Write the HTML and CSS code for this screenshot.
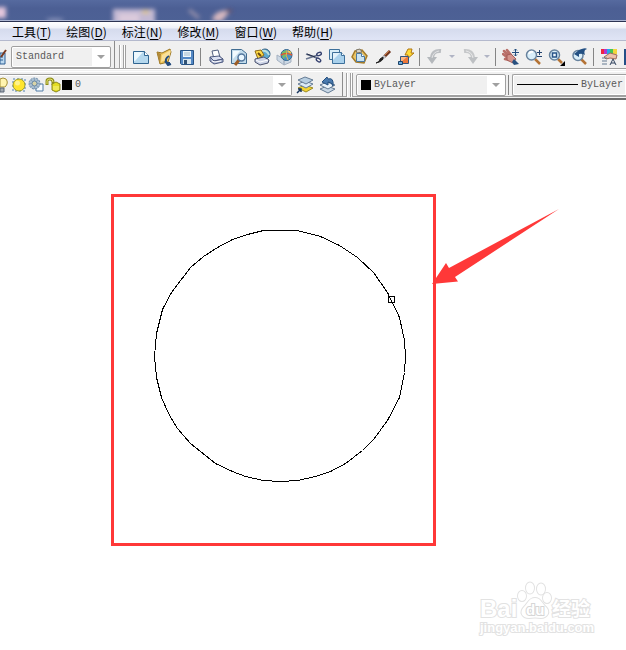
FILE: index.html
```
<!DOCTYPE html>
<html lang="zh-CN">
<head>
<meta charset="utf-8">
<title>CAD</title>
<link rel="stylesheet" href="styles.css">
</head>
<body>
<header class="titlebar">
  <svg class="glass" aria-hidden="true">
    <defs><filter id="soft" x="-50%" y="-50%" width="200%" height="200%"><feGaussianBlur stdDeviation="2"/></filter></defs>
    <g filter="url(#soft)">
      <rect x="-6" y="7" width="12" height="11" fill="#e3c6dc"/>
      <rect x="113" y="9" width="42" height="16" fill="#c3b9d3"/>
      <rect x="119" y="14" width="20" height="8" fill="#dccbdc"/>
      <rect x="142" y="10" width="7" height="4" fill="#dac28e"/>
      <path d="M189 10l10 8" stroke="#9a93ac" stroke-width="3"/>
      <path d="M212 20q2-10 18-10q-4 8-10 12z" fill="#d5b7bf"/>
      <path d="M226 11l6 0" stroke="#6b5166" stroke-width="3"/>
      <ellipse cx="55" cy="20" rx="9" ry="2" fill="#8791b8"/>
    </g>
  </svg>
</header>
<nav class="menubar">
  <a href="#">工具(<u>T</u>)</a>
  <a href="#">绘图(<u>D</u>)</a>
  <a href="#">标注(<u>N</u>)</a>
  <a href="#">修改(<u>M</u>)</a>
  <a href="#">窗口(<u>W</u>)</a>
  <a href="#">帮助(<u>H</u>)</a>
</nav>

<div class="toolrow">
  <div class="group styles">
    <button class="cut-off" aria-label="文字样式"><svg viewBox="0 0 8 18"><path d="M0 5h5v11H0z" fill="#bcd8ee" stroke="#2c5f94"/><path d="M0 9h3M0 12h3" stroke="#2c5f94"/><path d="M1 9L6 2" stroke="#7a3a20" stroke-width="2"/></svg></button>
    <label class="combo combo-style"><select aria-label="样式"><option>Standard</option></select><span class="drop"></span></label>
  </div>
  <div class="group standard">
    <span class="grip"></span>
    <button aria-label="新建"><svg viewBox="0 0 18 18"><path d="M1.500 3.500h11l4 4v8h-15z" fill="#b5d8ee" stroke="#306591"/><path d="M2 4h9L3 13H2z" fill="#edf8fd"/><path d="M12.500 3.500v4h4" fill="#fff" stroke="#306591"/></svg></button>
    <button aria-label="打开"><svg viewBox="0 0 18 18"><path d="M2 4l5 1 8-4 1 3-3 10-8 2z" fill="#f0c75b" stroke="#997421"/><path d="M2 4l4 2-1 10z" fill="#b28a39"/><path d="M7 7l9-5-2 8-8 4z" fill="#fae19b"/><path d="M14 8q-5 3-2 7h3M10 13l3 4 3-1" fill="none" stroke="#234b7c" stroke-width="2"/></svg></button>
    <button aria-label="保存"><svg viewBox="0 0 18 18"><path d="M2.500 2.500h13v14h-12l-1-1z" fill="#5388c5" stroke="#285486"/><path d="M5 3h8v6H5z" fill="#eef7fc"/><path d="M6 5h6M6 7h6" stroke="#9fb8cb"/><path d="M5 11h8v5H5z" fill="#d8e6ef"/><path d="M6 12h3v4H6z" fill="#315275"/></svg></button>
    <span class="sep"></span>
    <button aria-label="打印"><svg viewBox="0 0 18 18"><path d="M5 3l6-1 2 7-6 2z" fill="#fff" stroke="#526080"/><path d="M3 9l9-1 4 3-9 2z" fill="#dbe1f2" stroke="#4c587e"/><path d="M3 9v4l4 3 9-2v-3l-9 2z" fill="#aab5d2" stroke="#4c587e"/><path d="M5 13l3 1 6-1" stroke="#fff" fill="none"/></svg></button>
    <button aria-label="打印预览"><svg viewBox="0 0 18 18"><path d="M1.500 1.500h10l5 4v10h-15z" fill="#c3dcec" stroke="#416c91"/><path d="M3 3h7L3 11z" fill="#f1fafe"/><path d="M9 12l-4 5" stroke="#9e5d25" stroke-width="3"/><circle cx="11.500" cy="9.500" r="3.500" fill="#eaf7ff" stroke="#54779e" stroke-width="1.500"/></svg></button>
    <button aria-label="发布"><svg viewBox="0 0 18 18"><circle cx="12" cy="6" r="5" fill="#5ca9ce" stroke="#315d80"/><path d="M9 3q5-1 7 4" stroke="#b9dfdf" fill="none" stroke-width="2"/><path d="M2 3l6-1 3 5-6 4z" fill="#ffda45" stroke="#8e6a15"/><path d="M5 5l3 3" stroke="#6b4a10" stroke-width="2"/><path d="M2 11l9-2 5 3-1 3-8 2-5-3z" fill="#cbd2e5" stroke="#49516e"/><path d="M3 12l4 2 8-2" stroke="#fff" fill="none"/></svg></button>
    <button aria-label="三维DWF"><svg viewBox="0 0 18 18"><path d="M1 7l7 4v6l-7-5zM8 11l7-3v6l-7 3z" fill="#cdd9e5" stroke="#a5b1c1"/><circle cx="10.500" cy="7" r="5.500" fill="#4b94c5" stroke="#31648e"/><path d="M6 4l4-2 1 5-4 4z" fill="#73bd67"/><path d="M5 7q5-3 11 0" fill="none" stroke="#e05532" stroke-width="1.500"/><path d="M11 2q-2 6 1 10" fill="none" stroke="#e8b54a"/><path d="M12 3l3 2" stroke="#f5ca4c" stroke-width="2"/></svg></button>
    <span class="sep"></span>
    <button aria-label="剪切"><svg viewBox="0 0 18 18"><path d="M1 6l11 4M1 11l12-4" stroke="#6a7690" stroke-width="1.500"/><path d="M2 6l8 3" stroke="#222d48"/><ellipse cx="14" cy="6" rx="2.500" ry="1.500" fill="none" stroke="#34406f" stroke-width="1.300" transform="rotate(-20 14 6)"/><ellipse cx="13.500" cy="12" rx="2.500" ry="1.500" fill="none" stroke="#34406f" stroke-width="1.300" transform="rotate(35 13.500 12)"/></svg></button>
    <button aria-label="复制"><svg viewBox="0 0 18 18"><path d="M1.500 1.500h10v10h-10z" fill="#d8edf8" stroke="#3d709b"/><path d="M4.500 4.500h9l3 3v8h-12z" fill="#a9d1ec" stroke="#3d709b"/><path d="M5 5h7l-7 7z" fill="#e2f2fb"/><path d="M13.500 4.500v3h3" fill="#fff" stroke="#3d709b"/></svg></button>
    <button aria-label="粘贴"><svg viewBox="0 0 18 18"><path d="M4 3l7-1 5 6-3 7-8-1-4-5z" fill="#e9c568" stroke="#a47b28" stroke-width="1.500"/><path d="M5 2l4-1 2 3-5 1z" fill="#d7d2c4" stroke="#7d7664"/><path d="M5.500 5.500h5l3 3v5h-8z" fill="#cbe4f3" stroke="#4a79a2"/><path d="M10.500 5.500v3h3" fill="#fff" stroke="#4a79a2"/></svg></button>
    <button aria-label="特性匹配"><svg viewBox="0 0 18 18"><path d="M16 3l-6 6" stroke="#70351f" stroke-width="3"/><path d="M11 8l-3 3" stroke="#c1c4c9" stroke-width="3"/><path d="M9 9q1 4-7 6q4-1 4-4z" fill="#222" stroke="#222"/><path d="M15 3l-4 4" stroke="#c97942"/></svg></button>
    <button aria-label="块编辑器"><svg viewBox="0 0 18 18"><path d="M11 1h4l-1 4h3L9 12l2-5H8z" fill="#ffdb38" stroke="#af7612"/><path d="M3.500 8.500h8v7h-8z" fill="#ee783a" stroke="#34547e"/><path d="M4 9h6l-6 5z" fill="#ffb680"/><path d="M1.500 13.500h4v3h-4z" fill="#6bacdd" stroke="#1c4268"/></svg></button>
    <span class="sep"></span>
    <button aria-label="放弃"><svg viewBox="0 0 18 18"><path d="M15 3Q6 2 6 11" fill="none" stroke="#bbbec2" stroke-width="4"/><path d="M1 9h10l-5 7z" fill="#b4b8bc"/><path d="M13 3Q7 4 6 10" fill="none" stroke="#e2e3e5"/></svg></button>
    <button class="mini" aria-label="放弃列表"><span class="tri"></span></button>
    <button aria-label="重做"><svg viewBox="0 0 18 18"><path d="M3 3Q12 2 12 11" fill="none" stroke="#c6c8ca" stroke-width="4"/><path d="M7 9h10l-5 7z" fill="#bdc0c3"/><path d="M5 3Q11 4 12 10" fill="none" stroke="#e8e8e9"/></svg></button>
    <button class="mini" aria-label="重做列表"><span class="tri"></span></button>
    <span class="sep"></span>
    <button aria-label="平移"><svg viewBox="0 0 18 18"><path d="M2 3l4 4M1 6l5 4M5 2l4 5M3 11l4 1" stroke="#b96f69" stroke-width="2.500" stroke-linecap="round"/><path d="M5 7l4-1 5 5-3 4-6-3z" fill="#d5948c" stroke="#a45d58"/><path d="M12 11l5 5-5 1-2-3z" fill="#285180"/><path d="M13.500 1v7M10 4.500h7" stroke="#244e7e"/><path d="M12 2.500l1.500-1.500 1.500 1.500M12 6.500l1.500 1.500 1.500-1.500" fill="none" stroke="#244e7e"/></svg></button>
    <button aria-label="实时缩放"><svg viewBox="0 0 18 18"><path d="M10 11l5 5" stroke="#b47335" stroke-width="2.500"/><circle cx="6.500" cy="7" r="5" fill="#d9eef9" stroke="#68839e" stroke-width="1.500"/><path d="M4 6q1-3 4-2" stroke="#fff" fill="none" stroke-width="2"/><path d="M12 4.500h5M14.500 2v5M12 8.500h5" stroke="#24456f"/></svg></button>
    <button aria-label="窗口缩放"><svg viewBox="0 0 18 18"><path d="M10 11l4 4" stroke="#b47335" stroke-width="2.500"/><circle cx="6.500" cy="7" r="5" fill="#d9eef9" stroke="#68839e" stroke-width="1.500"/><path d="M4.500 5h4v4h-4z" fill="#f0f8fd" stroke="#285488" stroke-width="1.500"/><path d="M17 13v5h-5z" fill="#000"/></svg></button>
    <button aria-label="缩放上一个"><svg viewBox="0 0 18 18"><path d="M10 11l5 5" stroke="#b47335" stroke-width="2.500"/><circle cx="7" cy="7.500" r="5" fill="#d9eef9" stroke="#68839e" stroke-width="1.500"/><path d="M6 3q8-4 10-2q-4 1-2 6q-3-2-6-1v3L3 6l5-4z" fill="#235083"/></svg></button>
    <span class="sep"></span>
    <button aria-label="特性"><svg viewBox="0 0 18 18"><path d="M1 1h3v5H1z" fill="#ef233f"/><path d="M4 1h3v5H4z" fill="#b335ce"/><path d="M7 1h3v5H7z" fill="#23a8ec"/><path d="M10 1h3v5h-3z" fill="#43c658"/><path d="M13 1h4v5h-4z" fill="#f3d53d"/><path d="M4 9l6-4 7 2-1 4-6-1-4 1z" fill="#edc2ad" stroke="#9d6b5a"/><path d="M2 10h5M2 13h5M2 16h5" stroke="#657a92"/><path d="M10 17l3-6 3 6M11 15h4" fill="none" stroke="#31435e"/></svg></button>
    <button aria-label="设计中心"><svg viewBox="0 0 18 18"><path d="M2 2h15v14H2z" fill="#8bb8de" stroke="#244f87" stroke-width="2"/></svg></button>
  </div>
</div>

<div class="toolrow lower">
  <div class="group layers">
    <div class="combo combo-layer">
      <svg class="state bulb" viewBox="0 0 10 16"><path d="M0 2Q3 0 6 2q3 4-1 8H0z" fill="#fff4b0" stroke="#a59037"/><path d="M0 11h4v4H0z" fill="#a1a8b1" stroke="#596574"/></svg>
      <svg class="state" viewBox="0 0 16 16"><path d="M2 2h12v12H2z" fill="none" stroke="#4c7eb1" stroke-dasharray="2 2"/><circle cx="8" cy="8" r="6" fill="#ffe52e" stroke="#9c9b28"/><circle cx="6.500" cy="6" r="2.500" fill="#fff38c"/></svg>
      <svg class="state" viewBox="0 0 16 16"><path d="M8 7h7v7H8z" fill="#f6fbff" stroke="#507ba5"/><circle cx="6.500" cy="6.500" r="5.500" fill="#a9bed0" stroke="#6989a7" stroke-dasharray="2 1"/><path d="M6.500 1v11M1 6.500h11M3 3l7 7M10 3l-7 7" stroke="#8aa4bc"/><circle cx="6.500" cy="6.500" r="2.500" fill="#d9d4a8" stroke="#6989a7"/></svg>
      <svg class="state" viewBox="0 0 16 16"><path d="M2 8V4q0-2 3-2t3 3v3" fill="none" stroke="#8f8e1a" stroke-width="3"/><path d="M2 7V4q0-2 3-2t3 3" fill="none" stroke="#e3e170"/><path d="M7 7l4-2 4 2v6l-4 2-4-2z" fill="#e3dc20" stroke="#89871d"/><path d="M8 10h6M8 12h6" stroke="#faf687"/></svg>
      <span class="swatch"></span>
      <select aria-label="图层"><option>0</option></select><span class="drop"></span>
    </div>
    <button aria-label="图层置为当前"><svg viewBox="0 0 18 18"><path d="M2 12l7-3 8 3-7 4z" fill="#f2d331" stroke="#9c8a23"/><path d="M2 8l7-3 8 3-7 4z" fill="#dceaf5" stroke="#647b94"/><path d="M2 4l7-3 8 3-7 4z" fill="#b7cee1" stroke="#647b94"/><path d="M1 17l4-4M2 13h3v3" stroke="#17365e" fill="none" stroke-width="1.500"/></svg></button>
    <button aria-label="上一个图层"><svg viewBox="0 0 18 18"><path d="M1 13l7-3 8 3-7 4z" fill="#c8d7e5" stroke="#647b94"/><path d="M1 9l7-3 8 3-7 4z" fill="#eaf3fa" stroke="#647b94"/><path d="M3 6l5-5 1 2q6-2 5 7q-1-4-5-4v3z" fill="#4a7aae" stroke="#234e7e"/></svg></button>
  </div>
  <div class="group properties">
    <span class="grip"></span>
    <label class="combo combo-color"><span class="swatch"></span><select aria-label="颜色"><option>ByLayer</option></select><span class="drop"></span></label>
    <span class="sep"></span>
    <label class="combo combo-line"><span class="line"></span><select aria-label="线型"><option>ByLayer</option></select></label>
  </div>
</div>

<main class="canvas">
  <svg class="drawing" role="img" aria-label="圆">
    <g transform="translate(.5 .5)" fill="none" stroke="#000" shape-rendering="crispEdges">
      <polygon points="263,130 297,130 320,136 339,145 357,157 373,172 387,192 399,217 404,240 405,256 404,272 399,297 387,320 373,339 362,350 345,363 330,371 315,376 297,380 280,381 263,380 245,376 232,371 215,363 190,343 177,328 168,313 161,297 156,277 154,256 156,233 162,209 171,192 190,167 203,156 217,147 232,139 247,134"/>
      <rect x="388" y="196" width="6" height="6"/>
    </g>
    <rect x="112.500" y="95.500" width="322" height="349" fill="none" stroke="#ff3838" stroke-width="3"/>
    <polygon points="559,109 449,168 446,163 432,184 458,181.500 455,177" fill="#ff3838"/>
  </svg>
  <svg class="watermark" viewBox="0 0 120 60" role="img" aria-label="Baidu 经验">
    <g fill="#fff" stroke="#e2e2e2" stroke-width="2" paint-order="stroke">
      <path d="M57 20c6 0 7 6 11 9c5 5 1 11-5 11q-6-1-12 0c-7 0-10-6-5-11c4-4 5-9 11-9z"/>
      <ellipse cx="44" cy="18" rx="4" ry="5"/><ellipse cx="52" cy="10" rx="4" ry="5.500"/><ellipse cx="63" cy="11" rx="4" ry="5.500"/><ellipse cx="69" cy="20" rx="4" ry="5"/>
      <text class="brand" x="2" y="39">Bai</text>
      <text class="du" x="48" y="37">du</text>
      <text class="cjk" x="74" y="38">经验</text>
      <text class="url" x="2" y="54">jingyan.baidu.com</text>
    </g>
  </svg>
</main>
</body>
</html>
```

FILE: styles.css
```
* { box-sizing: border-box; }

body {
  margin: 0;
  min-height: 100vh;
  display: flex;
  flex-direction: column;
  overflow: hidden;
  background: #f0f0f0;
  font: 12px/16px "Liberation Sans", "Noto Sans CJK SC", sans-serif;
}

button {
  flex: none;
  display: flex;
  align-items: center;
  justify-content: center;
  width: 23px;
  height: 22px;
  padding: 0;
  border: 0;
  background: none;
}
button svg { flex: none; width: 18px; height: 18px; }

.titlebar {
  height: 22px;
  overflow: hidden;
  background: linear-gradient(#566a9f, #4c5f94 40%, #4d6195);
  border-bottom: 1px solid #2c3352;
  box-shadow: inset 0 -1px #adb6d2;
}
.glass { display: block; width: 100%; height: 20px; }

.menubar {
  display: flex;
  gap: 15px;
  height: 19px;
  padding: 2px 12px 0;
  background: linear-gradient(#fff, #eff1f8 6px, #d5dbed 7px, #dfe4f5 17px);
  border-bottom: 1px solid #b4b9cd;
  font-family: "Noto Sans CJK SC", sans-serif;
}
.menubar a { color: #000; text-decoration: none; white-space: nowrap; }
.menubar u { text-underline-offset: 2px; }

.toolrow { display: flex; height: 29px; border-bottom: 1px solid #fff; }
.group {
  display: flex;
  align-items: center;
  height: 28px;
  padding-top: 4px;
  border-bottom: 1px solid #a0a0a0;
}
.styles, .layers { flex: none; border-right: 1px solid #8c8c8c; }
.styles { width: 115px; gap: 3px; padding-right: 3px; }
.standard { flex: 1; min-width: 0; padding-left: 4px; overflow: hidden; }
.cut-off { width: 8px; }
.cut-off svg { width: 8px; }

.lower {
  height: 29px;
  margin-top: 1px;
  border-top: 1px solid #fff;
  border-bottom: 2px solid #6c6c6c;
}
.lower .group { height: 25px; padding-top: 1px; }
.layers { width: 343px; }
.properties { flex: 1; min-width: 0; padding-left: 3px; }

.grip {
  flex: none;
  width: 7px;
  height: 24px;
  margin-right: 3px;
  border: solid #a0a0a0;
  border-width: 0 1px;
  background: linear-gradient(90deg, #fff 1px, #f0f0f0 1px 3px, #a0a0a0 3px 4px, #fff 4px);
}
.sep { flex: none; width: 6px; height: 18px; background: linear-gradient(90deg, transparent 2px, #858585 2px 3px, transparent 3px); }
.lower .sep { height: 20px; }

.mini { width: 12px; }
.tri { border: 3px solid transparent; border-top-color: #b0b4c4; border-bottom: 0; }

.combo {
  flex: none;
  display: flex;
  align-items: center;
  height: 22px;
  padding: 1px;
  border: 1px solid #a0a0a0;
  border-radius: 2px;
  background: linear-gradient(#f0f0f0, #f0f0f0) content-box, #fff;
}
.combo select {
  flex: 1;
  min-width: 0;
  height: 18px;
  padding: 0 3px;
  border: 0;
  appearance: none;
  background: none;
  color: #585858;
  font: 10px/18px "Liberation Mono", monospace;
}
.drop {
  flex: none;
  display: flex;
  align-items: center;
  justify-content: center;
  width: 17px;
  height: 18px;
  background: #fff;
}
.drop::after { content: ""; border: 4px solid transparent; border-top-color: #a0a0a0; border-bottom: 0; }
.combo-style { flex: 1; }
.combo-layer { width: 292px; margin-right: 1px; padding-left: 0; border-left: 0; border-radius: 0 2px 2px 0; }
.combo-color { width: 150px; }
.combo-line { flex: 1; min-width: 0; border-right: 0; border-radius: 2px 0 0 2px; }
.state { flex: none; width: 16px; height: 16px; margin-right: 1px; }
.bulb { width: 10px; }
.swatch { flex: none; width: 10px; height: 10px; background: #000; }
.combo-color .swatch { margin-left: 3px; }
.line { flex: none; width: 61px; height: 1px; margin-left: 3px; background: #000; }
.combo .line + select { padding-right: 0; }

.canvas { position: relative; flex: 1; display: flex; min-height: 460px; background: #fff; }
.drawing { display: block; width: 100%; min-height: 460px; }
.watermark { position: absolute; right: 28px; bottom: 12px; width: 120px; height: 60px; }
.watermark text { font-weight: bold; font-family: "Liberation Sans", "Noto Sans CJK SC", sans-serif; }
.brand { font-size: 24px; }
.watermark .du { font-size: 15px; fill: #fff; stroke: #d6d6d6; }
.cjk { font-size: 19px; }
.url { font-size: 13px; }
```
